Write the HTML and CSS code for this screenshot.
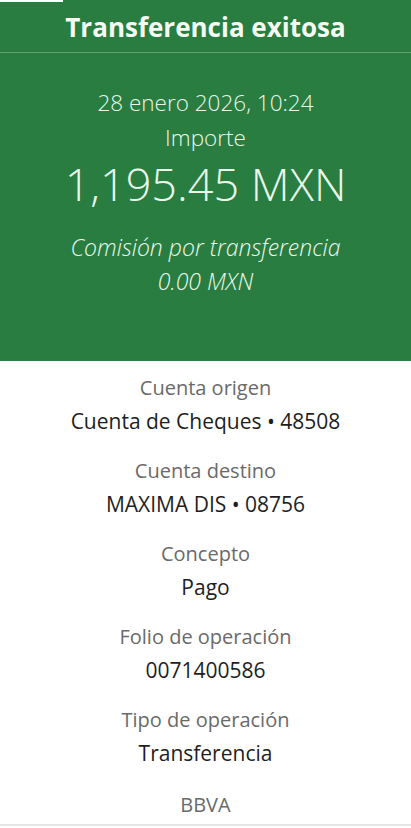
FILE: index.html
```html
<!DOCTYPE html>
<html lang="es">
<head>
  <meta charset="UTF-8" />
  <title>Transferencia exitosa</title>
  <link rel="stylesheet" href="styles.css">
</head>
<body>
  <div class="header">
    <div class="notch"></div>
    <h1 class="title">Transferencia exitosa</h1>
    <div class="summary">
      <p class="date">28 enero 2026, 10:24</p>
      <p class="amount-label">Importe</p>
      <p class="amount">1,195.45 MXN</p>
      <p class="fee">Comisión por transferencia</p>
      <p class="fee">0.00 MXN</p>
    </div>
  </div>

  <div class="details">
    <div class="item">
      <p class="label">Cuenta origen</p>
      <p class="value">Cuenta de Cheques • 48508</p>
    </div>
    <div class="item">
      <p class="label">Cuenta destino</p>
      <p class="value">MAXIMA DIS • 08756</p>
    </div>
    <div class="item">
      <p class="label">Concepto</p>
      <p class="value">Pago</p>
    </div>
    <div class="item">
      <p class="label">Folio de operación</p>
      <p class="value">0071400586</p>
    </div>
    <div class="item">
      <p class="label">Tipo de operación</p>
      <p class="value">Transferencia</p>
    </div>
    <p class="label bank">BBVA</p>
  </div>
</body>
</html>
```

FILE: styles.css
```css
body {
  margin: 0;
  font-family: "Open Sans", "Liberation Sans", sans-serif;
  background: #fff;
  text-align: center;
}
p {
  margin: 0;
}
.header {
  background: #2a7d41;
  color: #e9f9ea;
  height: 361px;
}
.notch {
  width: 63px;
  height: 2px;
  background: #fff;
}
.title {
  margin: 0;
  font-size: 26px;
  font-weight: 700;
  line-height: 50px;
  color: #f4fbf2;
  border-bottom: 1px solid #5fa26f;
}
.summary {
  padding-top: 32px;
}
.date, .amount-label {
  font-size: 22.5px;
  font-weight: 300;
  line-height: 35px;
}
.amount {
  font-size: 45px;
  font-weight: 300;
  line-height: 58px;
  margin-bottom: 17px;
}
.fee {
  font-size: 23px;
  font-style: italic;
  font-weight: 300;
  line-height: 34px;
}
.details {
  padding-top: 12px;
  border-bottom: 2px solid #e6e6e6;
  height: 465px;
  box-sizing: border-box;
}
.item {
  height: 83px;
}
.label {
  font-size: 20px;
  color: #6a6a6a;
  line-height: 30px;
}
.value {
  font-size: 21px;
  color: #1e1e1e;
  line-height: 36px;
}
.bank {
  line-height: 34px;
}
```
